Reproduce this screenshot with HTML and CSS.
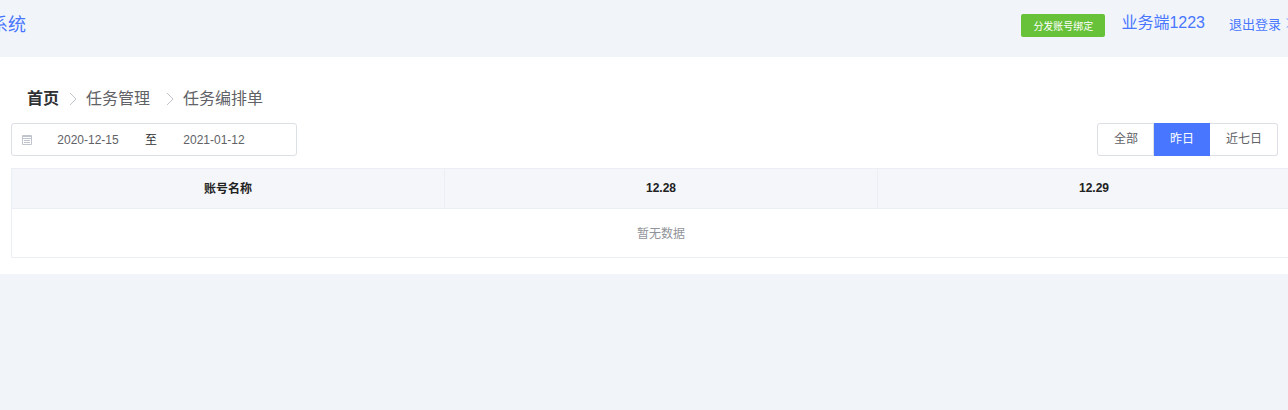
FILE: index.html
```
<!DOCTYPE html>
<html lang="zh-CN">
<head>
  <meta charset="UTF-8">
  <meta name="viewport" content="width=device-width, initial-scale=1.0">
  <title>任务编排单</title>
  <link rel="stylesheet" href="styles.css">
</head>
<body>
  <header class="header">
    <div class="header-title">系统</div>
    <div class="header-right">
      <button type="button" class="btn-bind">分发账号绑定</button>
      <span class="user-name">业务端1223</span>
      <a href="#" class="logout">退出登录
        <svg class="arrow-small" viewBox="0 0 8 12"><path d="M1 1.500L5.500 6L1 10.500"/></svg>
      </a>
    </div>
  </header>

  <main class="main">
    <nav class="breadcrumb">
      <a href="#" class="crumb-home">首页</a>
      <svg class="arrow" viewBox="0 0 8 14"><path d="M1 1l6 6-6 6"/></svg>
      <a href="#" class="crumb">任务管理</a>
      <svg class="arrow" viewBox="0 0 8 14"><path d="M1 1l6 6-6 6"/></svg>
      <span>任务编排单</span>
    </nav>

    <div class="toolbar">
      <div class="date-range">
        <svg class="date-icon" viewBox="0 0 12 12">
          <path d="M1.500 1.500h9v9h-9zM1.500 2.500h9M1.500 4.500h9M3 6.500h6M3 8.500h6"/>
        </svg>
        <input type="text" class="date-input" value="2020-12-15" aria-label="开始日期">
        <span class="date-separator">至</span>
        <input type="text" class="date-input" value="2021-01-12" aria-label="结束日期">
      </div>

      <div class="radio-group" role="radiogroup" aria-label="日期">
        <label class="radio-button"><input type="radio" name="range" value="all"><span>全部</span></label>
        <label class="radio-button"><input type="radio" name="range" value="yesterday" checked><span>昨日</span></label>
        <label class="radio-button"><input type="radio" name="range" value="week"><span>近七日</span></label>
      </div>
    </div>

    <div class="table-wrap">
      <table class="table">
        <thead>
          <tr>
            <th>账号名称</th>
            <th>12.28</th>
            <th>12.29</th>
          </tr>
        </thead>
        <tbody>
          <tr>
            <td colspan="3" class="table-empty">暂无数据</td>
          </tr>
        </tbody>
      </table>
    </div>
  </main>
</body>
</html>
```

FILE: styles.css
```
* {
  box-sizing: border-box;
}
body {
  margin: 0;
  background-color: #f1f5fa;
  color: #606266;
  font-family: "Liberation Sans", "Noto Sans CJK SC", sans-serif;
  font-size: 12px;
  overflow-x: hidden;
}
a {
  color: inherit;
  text-decoration: none;
}

/* header */
.header {
  display: flex;
  justify-content: space-between;
  height: 57px;
  padding-bottom: 7px;
  color: #4876ff;
  overflow: hidden;
}
.header-title {
  margin-left: -10px;
  font-size: 18px;
  line-height: 50px;
}
.header-right {
  display: flex;
  align-items: center;
  margin-right: -6px;
}
.btn-bind {
  height: 23px;
  padding: 0 12px;
  border: none;
  border-radius: 2px;
  background-color: #67c23a;
  color: #fff;
  font-family: inherit;
  font-size: 10px;
  cursor: pointer;
}
.user-name {
  margin: 0 24px 0 16px;
  padding-bottom: 4px;
  font-size: 16px;
  line-height: 24px;
}
.logout {
  display: flex;
  align-items: center;
  gap: 5px;
  padding-bottom: 4px;
  font-size: 13px;
}
.arrow-small {
  width: 8px;
  height: 12px;
  fill: none;
  stroke: #4876ff;
}

/* content */
.main {
  padding: 28px 0 16px 11px;
  background-color: #fff;
}
.breadcrumb {
  display: flex;
  align-items: center;
  padding-left: 16px;
  font-size: 16px;
  line-height: 28px;
}
.crumb-home {
  color: #303133;
  font-weight: bold;
}
.crumb {
  margin-right: 6px;
}
.arrow {
  width: 8px;
  height: 14px;
  margin: 0 9px 0 10px;
  fill: none;
  stroke: #c0c4cc;
}
.toolbar {
  display: flex;
  justify-content: space-between;
  margin: 10px 10px 12px 0;
}
.date-range {
  display: flex;
  align-items: center;
  width: 286px;
  height: 33px;
  padding: 0 9px;
  border: 1px solid #dcdfe6;
  border-radius: 3px;
}
.date-icon {
  width: 12px;
  height: 12px;
  margin-right: 1px;
  fill: none;
  stroke: #c0c4cc;
}
.date-input {
  width: 108px;
  padding: 0;
  border: none;
  outline: none;
  background: none;
  color: #606266;
  font-family: inherit;
  font-size: 12px;
  text-align: center;
}
.date-separator {
  width: 18px;
  padding-bottom: 2px;
  color: #303133;
  text-align: center;
}
.radio-group {
  display: flex;
}
.radio-button input {
  position: absolute;
  opacity: 0;
}
.radio-button span {
  display: block;
  padding: 0 15px 0 16px;
  border: 1px solid #dcdfe6;
  border-left: none;
  line-height: 31px;
  cursor: pointer;
}
.radio-button:first-child span {
  border-left: 1px solid #dcdfe6;
  border-radius: 3px 0 0 3px;
}
.radio-button:last-child span {
  border-radius: 0 3px 3px 0;
}
.radio-button input:checked + span {
  border-color: #4876ff;
  background-color: #4876ff;
  color: #fff;
}

/* table, runs past the right edge */
.table-wrap {
  margin-right: -23px;
}
.table {
  width: 100%;
  border-collapse: collapse;
  table-layout: fixed;
}
.table th,
.table td {
  border: 1px solid #ebeef5;
  text-align: center;
}
.table th {
  height: 40px;
  padding: 0 0 2px;
  background-color: #f5f6f9;
  color: #222;
}
.table-empty {
  height: 49px;
  color: #909399;
}
.table .table-empty {
  padding: 0 0 2px;
}
```
